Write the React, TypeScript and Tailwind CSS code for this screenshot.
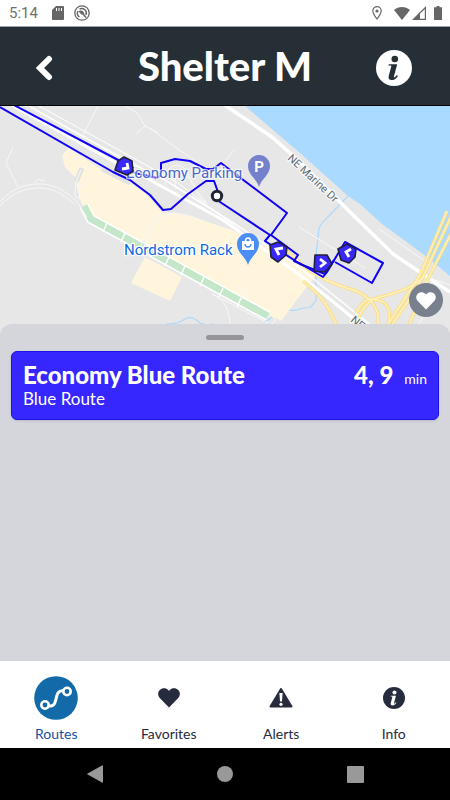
import { useState } from "react";
import type { ReactNode } from "react";

// Location arrows along the route: body outline + chevron
const buses = [
    { body: "M124 157 132 161 133 171 127 175 115 170 118 161Z", chevron: "M127 163 128 168 122 169" },
    { body: "M270 245 278 242 287 247 286 255 278 262 271 257Z", chevron: "M283 248 276 249 279 255" },
    { body: "M315 255 327 255 332 264 325 272 314 271Z", chevron: "M320 259 325 263 320 267" },
    { body: "M338 249 347 244 356 249 355 257 349 263 341 260Z", chevron: "M351 249 346 252 349 257" },
];

const routes = [{ name: "Economy Blue Route", line: "Blue Route", times: "4, 9" }];

function InfoIcon({ className, mark }: { className: string; mark: string }) {
    return (
        <svg viewBox="0 0 36 36" className={className} aria-hidden="true">
            <circle cx="18" cy="18" r="18" fill="currentColor" />
            <g className={mark}>
                <circle cx="18.8" cy="9" r="3.3" />
                <path d="M12.8 14.2h8.4l-3.3 12.2c-.3 1.2.6 1.1 1.4.3l1.6-1.7 1 .9c-1.9 2.9-4 4.2-6.3 4.2-2.5 0-3.5-1.6-2.9-4l2.5-9.3c.2-.9 0-1.2-.8-1.2h-2z" />
            </g>
        </svg>
    );
}

function HeartIcon({ className }: { className: string }) {
    return (
        <svg viewBox="0 0 22 20" className={className} fill="currentColor" aria-hidden="true">
            <path d="M11 19.5 2 10.3C-.4 7.8-.4 4.2 1.8 2 4.3-.4 8.1-.2 10.2 2l.8.9.8-.9c2.1-2.2 5.9-2.4 8.4 0 2.2 2.2 2.2 5.8-.2 8.3z" />
        </svg>
    );
}

function RoutesIcon() {
    return (
        <svg viewBox="0 0 44 44" className="h-11 w-11" fill="none" stroke="#fff" strokeWidth="2.6" aria-hidden="true">
            <circle cx="22" cy="22" r="21.8" fill="#126aa8" stroke="none" />
            <circle cx="11" cy="29" r="3.7" />
            <circle cx="33" cy="15.5" r="3.7" />
            <path d="M14.7 30c4.6.7 6.1-1.7 7.1-6.2 1.3-5.8 2.2-9.6 7.600-8.900" strokeWidth="3" />
        </svg>
    );
}

function AlertIcon() {
    return (
        <svg viewBox="0 0 24 20" className="h-5 w-6" aria-hidden="true">
            <path d="M12 1 22.5 18.5h-21z" fill="currentColor" stroke="currentColor" strokeWidth="2" strokeLinejoin="round" />
            <path d="M10.400 5h3.200L13 13.500h-2z" fill="#fff" />
            <circle cx="12" cy="16.300" r="1.600" fill="#fff" />
        </svg>
    );
}

const tabs: { label: string; icon: ReactNode }[] = [
    { label: "Routes", icon: <RoutesIcon /> },
    { label: "Favorites", icon: <HeartIcon className="h-5 w-[22px]" /> },
    { label: "Alerts", icon: <AlertIcon /> },
    { label: "Info", icon: <InfoIcon className="h-[22px] w-[22px]" mark="fill-white" /> },
];

function StatusBar() {
    return (
        <div className="flex h-[27px] items-center justify-between border-b border-gray-400 bg-white pl-[9px] pr-2 text-[#666]">
            <div className="flex items-center">
                <span className="w-[43px] font-[Roboto,sans-serif] text-[15px] leading-5 text-[#707070]">5:14</span>
                <svg viewBox="0 0 12 14" className="h-[14px] w-3" aria-hidden="true">
                    <path d="M4 0h7a1 1 0 0 1 1 1v12a1 1 0 0 1-1 1H1a1 1 0 0 1-1-1V4z" fill="currentColor" />
                    <path d="M4.500 2v3M7 2v3M9.500 2v3" stroke="#fff" strokeWidth="1" />
                </svg>
                <svg viewBox="0 0 16 16" className="ml-[10px] h-4 w-4" fill="none" stroke="currentColor" aria-hidden="true">
                    <circle cx="8" cy="8" r="7.200" strokeWidth="1.300" />
                    <path d="M5.500 12A4.600 4.600 0 0 1 4 6M5.500 4.200A4.600 4.600 0 0 1 12 10" strokeWidth="1.400" />
                    <path d="M4.500 6.500C7 4.500 10 6 10.500 9.500L8.500 8.500 8 10z" fill="currentColor" stroke="none" />
                    <path d="M8.500 8.500l3.500 4" strokeWidth="1.500" />
                </svg>
            </div>
            <div className="flex items-center">
                <svg viewBox="0 0 10 14" className="h-[14px] w-[10px]" fill="none" stroke="currentColor" aria-hidden="true">
                    <path d="M5 13C2.500 9.700.8 7.200.8 4.900a4.200 4.200 0 0 1 8.400 0C9.200 7.200 7.500 9.700 5 13z" strokeWidth="1.200" />
                    <circle cx="5" cy="5" r="1.600" fill="currentColor" stroke="none" />
                </svg>
                <svg viewBox="0 0 16 13" className="ml-3 h-[13px] w-4" fill="currentColor" aria-hidden="true">
                    <path d="M8 13 0 3c4.500-4 11.500-4 16 0z" />
                </svg>
                <svg viewBox="0 0 14 14" className="ml-0.5 h-[14px] w-[14px]" aria-hidden="true">
                    <path d="M1.500 13.400 13.400 1.500v11.900z" fill="none" stroke="currentColor" strokeWidth="1.200" />
                    <path d="M.5 14 8 6.500V14z" fill="currentColor" />
                </svg>
                <svg viewBox="0 0 8 14" className="ml-2 h-[14px] w-2" fill="currentColor" aria-hidden="true">
                    <path d="M2.500 0h3v1.300H8V14H0V1.300h2.500z" />
                </svg>
            </div>
        </div>
    );
}

function Header() {
    return (
        <header className="flex h-[79px] items-center justify-between border-b border-black bg-[#252f35] pl-[34px] pr-[38px] text-white">
            <button type="button" aria-label="Back" className="flex w-10 items-center pt-1">
                <svg viewBox="0 0 20 26" className="h-[26px] w-5" fill="none" stroke="currentColor" strokeWidth="6" aria-hidden="true">
                    <path d="M15 4 6 13l9 9" strokeLinecap="round" />
                </svg>
            </button>
            <h1 className="text-[40px] leading-[44px] font-black">Shelter M</h1>
            <button type="button" aria-label="Information" className="pt-1">
                <InfoIcon className="h-9 w-9" mark="fill-[#252f35]" />
            </button>
        </header>
    );
}

function RouteMap() {
    return (
        <svg
            viewBox="0 106 450 234"
            preserveAspectRatio="xMidYMid slice"
            className="block h-full w-full font-[Roboto,sans-serif]"
            role="img"
            aria-label="Map of the route"
        >
            <rect y="106" width="450" height="234" fill="#e7e7e7" />

            {/* Water */}
            <path d="M245 106 300 153 348 196 360 204 382 224 400 237 427 257 450 276V106Z" fill="#aadaff" />
            <g fill="none" stroke="#aadaff" strokeWidth="1.200">
                <path d="M348 196 322 223 319 228 316 255M316 270v30l-5 7-12 2" />
                <path d="M166 324c8 0 14-1 19-5 5-3 10-1 15 4 5 3 9 1 13 1M264 322c8-2 10-10 17-12 8-1 13 2 19-1" />
            </g>

            {/* Commercial blocks */}
            <path
                d="M68 148 62 156 65 167 75 177 80 200 90 217 281 321 318 272 232 230 190 216 162 212 145 193 133 185 101 169Z"
                fill="#fef5dc"
            />
            <path d="M145 257 131 283 170 301 182 277Z" fill="#fef5dc" />
            <path d="M82 168 76 182M102 169l28 14" stroke="#e2e2e2" strokeWidth="5" />

            {/* Green strip */}
            <path d="M84 206 91 219 268 316" fill="none" stroke="#fff" strokeWidth="10" />
            <path d="M84 206 91 219 268 316" fill="none" stroke="#c4e7ca" strokeWidth="7" />
            <path
                d="m107 223-4 9M125 233l-4 9M169 257l-4 9M185 266l-4 9M204 277l-4 9M223 288l-4 9M241 298l-4 9"
                stroke="#fff"
                strokeWidth="1.500"
            />

            {/* Minor roads */}
            <g fill="none" stroke="#f8f8f8" strokeWidth="1">
                <path d="M98 106 82 137M125 106l12 7 8 13-9 8M145 126l13 7M13 147l-7 16 12 24M150 128l25 19 22 15M235 149l-9 11" />
                <path d="M0 202c10-12 25-19 42-18 15 1 26 9 35 18l10 15M0 206c11-12 25-19 42-18 15 1 24 9 32 16" />
                <path d="m81 170-5 12-1 14 5 3-3-15 10 4M35 183l3-4 4 2 3-2" />
                <path d="M166 186c-2-16 4-22 14-20 12 3 8 24 26 37M176 189c-2-14 1-17 7-15 12 5 12 19 24 29" />
                <path d="M213 295c8 2 16 11 17 29M212 294l56 29M237 286l11 12M249 287l-8 13M299 227l66 41" />
                <path d="M138 253 150 223l21-15M141 254l12-29 19-12M164 214c12-2 25 0 38 7" />
                <path d="M267 318c2-4 8-2 8 3l-5 4M379 229l46 32M450 285l-18-6-8 36-12 20" />
            </g>

            {/* Highway */}
            <g fill="none" stroke="#fff">
                <path d="M6 102 120 165 150 180 223 220 300 275 374 335" strokeWidth="3" />
                <path d="M18 100 125 160 165 180 235 224 300 268 378 331" strokeWidth="1.500" />
                <path d="M28 100 128 155 178 183 240 230" strokeWidth="1" />
                <path d="M223 104 272 137 300 162 352 214 393 254 427 277 450 292" strokeWidth="3.500" />
            </g>

            {/* Ramps */}
            <g fill="none" strokeLinejoin="round">
                <g stroke="#f8df8b" strokeWidth="3.500">
                    <path d="M455 208 423 277 413 294 383 338M458 220 427 281 403 340M447 211 420 275 379 338" />
                    <path d="M286 249c18 20 37 32 64 40 14 4 26 14 28 26 2 12-3 18-3 25M424 277c-14 12-28 16-44 20-14 3-22 16-25 37M356 313c8-16 17-16 27-11 10 7 6 18 4 38" />
                    <path d="M303 281c15 12 23 20 33 43" />
                </g>
                <g stroke="#fff0bc" strokeWidth="1.500">
                    <path d="M455 208 423 277 413 294 383 338M458 220 427 281 403 340M447 211 420 275 379 338" />
                    <path d="M286 249c18 20 37 32 64 40 14 4 26 14 28 26 2 12-3 18-3 25M424 277c-14 12-28 16-44 20-14 3-22 16-25 37M356 313c8-16 17-16 27-11 10 7 6 18 4 38" />
                    <path d="M303 281c15 12 23 20 33 43" />
                </g>
            </g>

            {/* Blue route */}
            <g fill="none" stroke="#1000f5" strokeWidth="2" strokeLinejoin="round">
                <path d="M12 104 120 161 135 173 157 178 161 175V163L175 159 190 161 206 169 213 169 221 163 242 179 287 213 271 235 298 255 294 261 301 264 323 277 327 272 345 242 383 263 372 283 335 262" />
                <path d="M0 107 113 172 130 180 150 195 163 210 171 209 188 194 206 181 214 181 218 192 217 200 270 235 265 241 300 264 325 274 334 260" />
            </g>

            {/* Place labels */}
            <g stroke="#fff" strokeWidth="2.500" strokeOpacity=".7" paintOrder="stroke" strokeLinejoin="round">
                <text x="126" y="178" fontSize="15" fill="#4968cb">Economy Parking</text>
                <text x="124" y="255" fontSize="15" fill="#1268df" strokeOpacity="1">Nordstrom Rack</text>
                <text transform="translate(287 159) rotate(43)" fontSize="11" fill="#596a73">NE Marine Dr</text>
                <text transform="translate(350 321) rotate(40)" fontSize="11" fill="#596a73">NE</text>
            </g>

            {/* Pins */}
            <path d="M259 187c-2-8-11-12-11-21a11 11 0 0 1 22 0c0 9-9 13-11 21z" fill="#7581cc" />
            <text x="259" y="172" fontSize="15" fontWeight="700" textAnchor="middle" fill="#fff">P</text>
            <path d="M248 265c-2-8-11-12-11-21a11 11 0 0 1 22 0c0 9-9 13-11 21z" fill="#4a8df6" />
            <path d="M242 241h12v9h-12z" fill="#fff" />
            <path d="M245.500 241c0-4 5-4 5 0" fill="none" stroke="#fff" strokeWidth="1.500" />
            <path d="M245 244c0 4 6 4 6 0" fill="none" stroke="#4a8df6" strokeWidth="1.300" />

            {/* Stop + buses */}
            <circle cx="217" cy="196" r="4.700" fill="#fff" stroke="#1d2733" strokeWidth="3" />
            {buses.map((bus) => (
                <g key={bus.body} strokeLinejoin="round">
                    <path d={bus.body} fill="#3928fa" stroke="#20203c" strokeWidth="1.600" />
                    <path d={bus.chevron} fill="none" stroke="#fff" strokeWidth="2.800" strokeLinejoin="miter" />
                </g>
            ))}
        </svg>
    );
}

export default function App() {
    const [activeTab, setActiveTab] = useState("Routes");

    return (
        <div className="flex min-h-screen flex-col bg-white font-[Lato,sans-serif]">
            <StatusBar />
            <Header />

            <main className="flex flex-1 flex-col">
                <div className="relative h-[234px]">
                    <RouteMap />
                    <button
                        type="button"
                        aria-label="Add to favorites"
                        className="absolute right-[7px] bottom-[23px] flex h-[34px] w-[34px] items-center justify-center rounded-full bg-[#78808e] text-white"
                    >
                        <HeartIcon className="mt-0.5 h-[18px] w-5" />
                    </button>
                </div>

                {/* Bottom sheet, overlaps the map */}
                <section className="relative -mt-4 flex-1 rounded-t-xl bg-[#d5d6dc] px-[11px] pt-[11px]">
                    <div className="mx-auto h-[5px] w-[38px] rounded-full bg-[#949499]" />
                    <ul className="mt-[11px]">
                        {routes.map((route) => (
                            <li key={route.name}>
                                <button
                                    type="button"
                                    className="flex h-[69px] w-full items-start justify-between rounded-md border border-[#1f12e6] bg-[#3626ff] px-[11px] pt-[9px] text-left text-white shadow-sm"
                                >
                                    <span className="flex flex-col">
                                        <span className="text-2xl leading-7 font-black">{route.name}</span>
                                        <span className="text-[17px] leading-5">{route.line}</span>
                                    </span>
                                    <span className="flex items-baseline gap-[11px]">
                                        <span className="text-2xl leading-7 font-black">{route.times}</span>
                                        <span className="text-[14px]">min</span>
                                    </span>
                                </button>
                            </li>
                        ))}
                    </ul>
                </section>
            </main>

            <nav className="grid h-[88px] grid-cols-4 border-t border-gray-300 bg-white">
                {tabs.map((tab) => (
                    <button
                        key={tab.label}
                        type="button"
                        onClick={() => setActiveTab(tab.label)}
                        className={`flex flex-col items-center pt-[15px] text-[14px] leading-5 ${activeTab === tab.label ? "text-[#164f9c]" : "text-[#262b3d]"}`}
                    >
                        <span className="flex h-11 items-center">{tab.icon}</span>
                        <span className="mt-1">{tab.label}</span>
                    </button>
                ))}
            </nav>

            {/* System navigation */}
            <div className="grid h-[52px] grid-cols-3 bg-black px-[30px] text-[#999]">
                <button type="button" aria-label="System back" className="flex items-center justify-center">
                    <svg viewBox="0 0 16 18" className="h-[18px] w-4" fill="currentColor" aria-hidden="true">
                        <path d="M16 1v16q0 1-1 .6L.6 9.600q-.8-.6 0-1.200L15 .4q1-.4 1 .6z" />
                    </svg>
                </button>
                <button type="button" aria-label="Home" className="flex items-center justify-center">
                    <span className="h-4 w-4 rounded-full bg-[#999]" />
                </button>
                <button type="button" aria-label="Recent apps" className="flex items-center justify-center">
                    <span className="h-[17px] w-[17px] rounded-[1px] bg-[#999]" />
                </button>
            </div>
        </div>
    );
}
